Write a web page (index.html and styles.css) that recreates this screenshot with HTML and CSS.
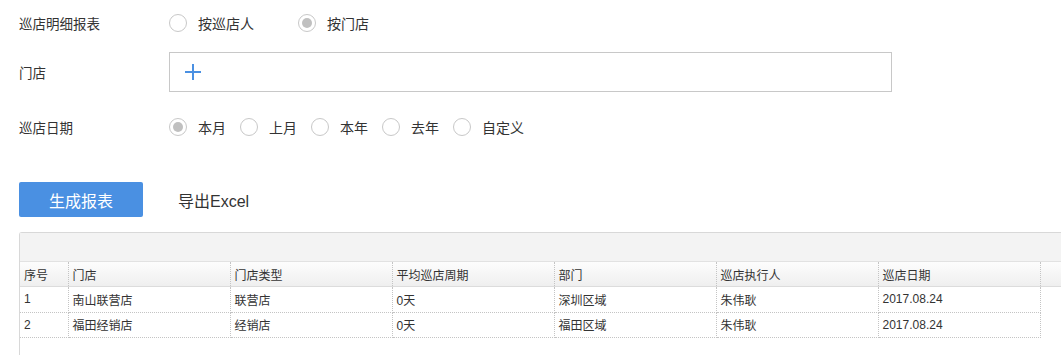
FILE: index.html
```html
<!DOCTYPE html>
<html lang="zh-CN">
<head>
  <meta charset="UTF-8">
  <title>巡店明细报表</title>
  <link rel="stylesheet" href="styles.css">
</head>
<body>
  <div class="filter">
    <div class="row row-type">
      <div class="label">巡店明细报表</div>
      <div class="options wide">
        <label class="radio"><span class="dot"></span>按巡店人</label>
        <label class="radio checked"><span class="dot"></span>按门店</label>
      </div>
    </div>

    <div class="row row-store">
      <div class="label">门店</div>
      <div class="store-box">
        <svg class="plus" width="16" height="16" viewBox="0 0 16 16">
          <path d="M8 0v16M0 8h16" stroke="#4a90e2" stroke-width="2"/>
        </svg>
      </div>
    </div>

    <div class="row row-date">
      <div class="label">巡店日期</div>
      <div class="options">
        <label class="radio checked"><span class="dot"></span>本月</label>
        <label class="radio"><span class="dot"></span>上月</label>
        <label class="radio"><span class="dot"></span>本年</label>
        <label class="radio"><span class="dot"></span>去年</label>
        <label class="radio"><span class="dot"></span>自定义</label>
      </div>
    </div>
  </div>

  <div class="actions">
    <button class="btn-primary">生成报表</button>
    <span class="btn-link">导出Excel</span>
  </div>

  <div class="grid">
    <div class="grid-toolbar"></div>
    <div class="grid-head">
      <table>
        <tr>
          <th class="c-no">序号</th><th>门店</th><th>门店类型</th><th>平均巡店周期</th><th>部门</th><th>巡店执行人</th><th>巡店日期</th>
        </tr>
      </table>
    </div>
    <table class="grid-body">
      <tr>
        <td class="c-no">1</td><td>南山联营店</td><td>联营店</td><td>0天</td><td>深圳区域</td><td>朱伟耿</td><td>2017.08.24</td>
      </tr>
      <tr>
        <td class="c-no">2</td><td>福田经销店</td><td>经销店</td><td>0天</td><td>福田区域</td><td>朱伟耿</td><td>2017.08.24</td>
      </tr>
    </table>
  </div>
</body>
</html>
```

FILE: styles.css
```css
html {
  overflow: hidden;
}
body {
  margin: 0;
  padding: 0 0 0 19px;
  font-family: 'Liberation Sans', 'Noto Sans CJK SC', sans-serif;
  font-size: 14px;
  color: #333;
  background: #fff;
}
.row {
  display: flex;
  align-items: center;
}
.label {
  width: 150px;
  font-size: 13.5px;
  color: #333;
}
.row-type {
  height: 45px;
}
.row-store {
  margin-top: 7px;
}
.row-date {
  margin-top: 16px;
  height: 38px;
}
.options {
  display: flex;
}
.radio {
  display: flex;
  align-items: center;
  color: #333;
  margin-right: 14px;
}
.options.wide .radio {
  margin-right: 44px;
}
.dot {
  width: 16px;
  height: 16px;
  border: 1px solid #c8c8c8;
  border-radius: 50%;
  margin-right: 11px;
  display: flex;
  align-items: center;
  justify-content: center;
}
.radio.checked .dot::after {
  content: '';
  width: 10px;
  height: 10px;
  border-radius: 50%;
  background: #c0c0c0;
}
.store-box {
  width: 706px;
  height: 38px;
  border: 1px solid #c8c8c8;
  display: flex;
  align-items: center;
  padding-left: 15px;
}
.actions {
  margin-top: 36px;
  display: flex;
  align-items: center;
}
.btn-primary {
  width: 124px;
  height: 35px;
  background: #4a90e2;
  color: #fff;
  border: none;
  border-radius: 2px;
  font-family: inherit;
  font-size: 16px;
  padding: 0;
}
.btn-link {
  margin-left: 35px;
  font-size: 16px;
  color: #333;
}
.grid {
  margin-top: 15px;
  height: 130px;
  border: 1px solid #d8d8d8;
  border-right: none;
  border-radius: 3px 0 0 0;
}
.grid-toolbar {
  height: 28px;
  background: #f3f3f3;
  border-bottom: 1px solid #e2e2e2;
}
.grid-head {
  background: linear-gradient(#fdfdfd, #efefef);
  border-bottom: 1px solid #dcdcdc;
}
table {
  border-collapse: collapse;
  table-layout: fixed;
  width: 1020px;
  font-size: 12px;
}
th, td {
  width: 162px;
  height: 24px;
  padding: 0 0 0 4px;
  text-align: left;
  font-weight: normal;
  color: #333;
  border-right: 1px dotted #c4c4c4;
  white-space: nowrap;
  box-sizing: border-box;
}
th.c-no, td.c-no {
  width: 48px;
}
.grid-body td {
  height: 25px;
  border-bottom: 1px dotted #c4c4c4;
}
```
